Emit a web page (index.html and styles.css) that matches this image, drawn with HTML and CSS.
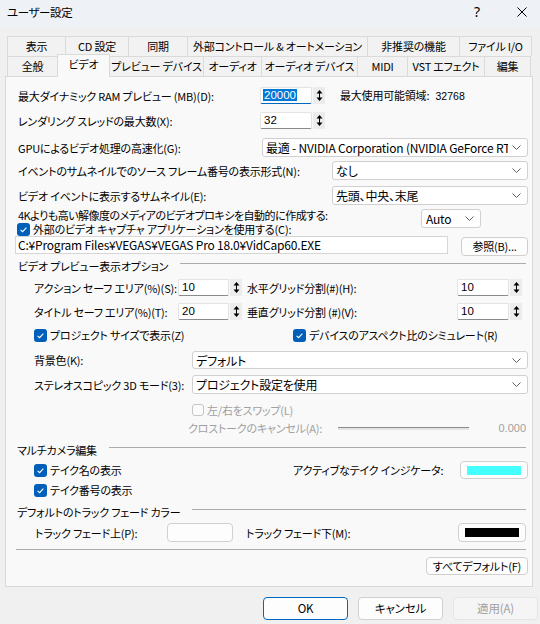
FILE: index.html
```
<!DOCTYPE html>
<html lang="ja">
<head>
<meta charset="utf-8">
<link rel="stylesheet" href="styles.css">
</head>
<body>
<div class="window">
  <div class="titlebar">
    <span class="title">ユーザー設定</span>
    <span class="help">?</span>
    <span class="close"><svg width="10" height="10" viewBox="0 0 10 10"><path d="M0.5 0.5 L9.5 9.5 M9.5 0.5 L0.5 9.5" stroke="#000" stroke-width="1" fill="none"/></svg></span>
  </div>

  <div class="tabs">
    <div class="tabrow">
      <div class="tab" style="width:58px">表示</div>
      <div class="tab" style="width:63px">CD 設定</div>
      <div class="tab" style="width:59px">同期</div>
      <div class="tab" style="width:180px">外部コントロール &amp; オートメーション</div>
      <div class="tab" style="width:92px">非推奨の機能</div>
      <div class="tab last" style="width:73px">ファイル I/O</div>
    </div>
    <div class="tabrow">
      <div class="tab" style="width:50px">全般</div>
      <div class="tab active" style="width:53px">ビデオ</div>
      <div class="tab" style="width:94px">プレビュー デバイス</div>
      <div class="tab" style="width:58px">オーディオ</div>
      <div class="tab" style="width:96px">オーディオ デバイス</div>
      <div class="tab" style="width:50px">MIDI</div>
      <div class="tab" style="width:77px">VST エフェクト</div>
      <div class="tab last" style="width:47px">編集</div>
    </div>
  </div>

  <div class="panel">
    <div class="row h19">
      <span class="lbl ind1" style="width:242px">最大ダイナミック RAM プレビュー (MB)(D):</span>
      <span class="num focus"><span class="hl">20000</span></span>
      <span class="spin"><svg width="7" height="13" viewBox="0 0 7 13"><path d="M3.5 1 L6.5 4.5 H0.5 Z M3.5 12 L6.5 8.5 H0.5 Z" fill="#000"/><path d="M3.5 4 V9" stroke="#000" stroke-width="1"/></svg></span>
      <span class="maxlbl">最大使用可能領域: <span class="mono">32768</span></span>
    </div>
    <div class="row h19 mt6">
      <span class="lbl ind1" style="width:242px">レンダリング スレッドの最大数(X):</span>
      <span class="num">32</span>
      <span class="spin"><svg width="7" height="13" viewBox="0 0 7 13"><path d="M3.5 1 L6.5 4.5 H0.5 Z M3.5 12 L6.5 8.5 H0.5 Z" fill="#000"/><path d="M3.5 4 V9" stroke="#000" stroke-width="1"/></svg></span>
    </div>
    <div class="row h19 mt8">
      <span class="lbl ind1" style="width:244px">GPUによるビデオ処理の高速化(G):</span>
      <span class="dd grow"><span class="v">最適 - NVIDIA Corporation (NVIDIA GeForce RTX 3070)</span><svg width="9" height="5" viewBox="0 0 9 5"><path d="M0.5 0.5 L4.5 4.5 L8.5 0.5" stroke="#5f5f5f" fill="none"/></svg></span>
    </div>
    <div class="row h19 mt4">
      <span class="lbl ind1" style="width:314px">イベントのサムネイルでのソース フレーム番号の表示形式(N):</span>
      <span class="dd grow"><span class="v">なし</span><svg width="9" height="5" viewBox="0 0 9 5"><path d="M0.5 0.5 L4.5 4.5 L8.5 0.5" stroke="#5f5f5f" fill="none"/></svg></span>
    </div>
    <div class="row h19 mt6">
      <span class="lbl ind1" style="width:314px">ビデオ イベントに表示するサムネイル(E):</span>
      <span class="dd grow"><span class="v">先頭、中央、末尾</span><svg width="9" height="5" viewBox="0 0 9 5"><path d="M0.5 0.5 L4.5 4.5 L8.5 0.5" stroke="#5f5f5f" fill="none"/></svg></span>
    </div>
    <div class="row h19 mt4 top">
      <span class="lbl ind1 tight" style="width:403px">4Kよりも高い解像度のメディアのビデオプロキシを自動的に作成する:</span>
      <span class="dd auto"><span class="v">Auto</span><svg width="9" height="5" viewBox="0 0 9 5"><path d="M0.5 0.5 L4.5 4.5 L8.5 0.5" stroke="#5f5f5f" fill="none"/></svg></span>
    </div>
    <div class="row h14 mtn6">
      <span class="cb ml1"><svg width="13" height="13" viewBox="0 0 13 13"><rect width="13" height="13" rx="3" fill="#005fb8"/><path d="M3.6 6.8 L5.6 8.7 L9.4 4.6" stroke="#fff" stroke-width="1.1" fill="none"/></svg></span>
      <span class="lbl cbt">外部のビデオ キャプチャ アプリケーションを使用する(C):</span>
    </div>
    <div class="row h19 top">
      <span class="path">C:¥Program Files¥VEGAS¥VEGAS Pro 18.0¥VidCap60.EXE</span>
      <span class="btn browse">参照(B)...</span>
    </div>

    <div class="row h14 mt4">
      <span class="lbl ind1">ビデオ プレビュー表示オプション</span>
      <span class="gline"></span>
    </div>
    <div class="row h17 mt6">
      <span class="lbl ind2" style="width:144px">アクション セーフ エリア(%)(S):</span>
      <span class="num nw">10</span>
      <span class="spin"><svg width="7" height="13" viewBox="0 0 7 13"><path d="M3.5 1 L6.5 4.5 H0.5 Z M3.5 12 L6.5 8.5 H0.5 Z" fill="#000"/><path d="M3.5 4 V9" stroke="#000" stroke-width="1"/></svg></span>
      <span class="lbl gridl" style="width:210px">水平グリッド分割(#)(H):</span>
      <span class="num">10</span>
      <span class="spin"><svg width="7" height="13" viewBox="0 0 7 13"><path d="M3.5 1 L6.5 4.5 H0.5 Z M3.5 12 L6.5 8.5 H0.5 Z" fill="#000"/><path d="M3.5 4 V9" stroke="#000" stroke-width="1"/></svg></span>
    </div>
    <div class="row h17 mt7">
      <span class="lbl ind2" style="width:144px">タイトル セーフ エリア(%)(T):</span>
      <span class="num nw">20</span>
      <span class="spin"><svg width="7" height="13" viewBox="0 0 7 13"><path d="M3.5 1 L6.5 4.5 H0.5 Z M3.5 12 L6.5 8.5 H0.5 Z" fill="#000"/><path d="M3.5 4 V9" stroke="#000" stroke-width="1"/></svg></span>
      <span class="lbl gridl" style="width:210px">垂直グリッド分割 (#)(V):</span>
      <span class="num">10</span>
      <span class="spin"><svg width="7" height="13" viewBox="0 0 7 13"><path d="M3.5 1 L6.5 4.5 H0.5 Z M3.5 12 L6.5 8.5 H0.5 Z" fill="#000"/><path d="M3.5 4 V9" stroke="#000" stroke-width="1"/></svg></span>
    </div>
    <div class="row h14 mt8">
      <span class="cell ind2">
        <span class="cb"><svg width="13" height="13" viewBox="0 0 13 13"><rect width="13" height="13" rx="3" fill="#005fb8"/><path d="M3.6 6.8 L5.6 8.7 L9.4 4.6" stroke="#fff" stroke-width="1.1" fill="none"/></svg></span>
        <span class="lbl cbt">プロジェクト サイズで表示(Z)</span>
      </span>
      <span class="cb"><svg width="13" height="13" viewBox="0 0 13 13"><rect width="13" height="13" rx="3" fill="#005fb8"/><path d="M3.6 6.8 L5.6 8.7 L9.4 4.6" stroke="#fff" stroke-width="1.1" fill="none"/></svg></span>
      <span class="lbl cbt">デバイスのアスペクト比のシミュレート(R)</span>
    </div>
    <div class="row h18 mt9">
      <span class="lbl ind2" style="width:158px">背景色(K):</span>
      <span class="dd grow h18d"><span class="v">デフォルト</span><svg width="9" height="5" viewBox="0 0 9 5"><path d="M0.5 0.5 L4.5 4.5 L8.5 0.5" stroke="#5f5f5f" fill="none"/></svg></span>
    </div>
    <div class="row h19 mt6">
      <span class="lbl ind2" style="width:158px">ステレオスコピック 3D モード(3):</span>
      <span class="dd grow"><span class="v">プロジェクト設定を使用</span><svg width="9" height="5" viewBox="0 0 9 5"><path d="M0.5 0.5 L4.5 4.5 L8.5 0.5" stroke="#5f5f5f" fill="none"/></svg></span>
    </div>
    <div class="row h14 mt9">
      <span class="cb off swap"></span>
      <span class="lbl dis swapt">左/右をスワップ(L)</span>
    </div>
    <div class="row h14 mt4">
      <span class="lbl dis xt" style="width:150px">クロストークのキャンセル(A):</span>
      <span class="track"></span>
      <span class="lbl dis val">0.000</span>
    </div>

    <div class="row h14 mt8">
      <span class="lbl ind0">マルチカメラ編集</span>
      <span class="gline"></span>
    </div>
    <div class="row h18 mt4">
      <span class="cell ind2">
        <span class="cb"><svg width="13" height="13" viewBox="0 0 13 13"><rect width="13" height="13" rx="3" fill="#005fb8"/><path d="M3.6 6.8 L5.6 8.7 L9.4 4.6" stroke="#fff" stroke-width="1.1" fill="none"/></svg></span>
        <span class="lbl cbt">テイク名の表示</span>
      </span>
      <span class="lbl" style="width:167px">アクティブなテイク インジケータ:</span>
      <span class="swatchbtn w68"><span class="sw cyan"></span></span>
    </div>
    <div class="row h14 mt4">
      <span class="cell ind2">
        <span class="cb"><svg width="13" height="13" viewBox="0 0 13 13"><rect width="13" height="13" rx="3" fill="#005fb8"/><path d="M3.6 6.8 L5.6 8.7 L9.4 4.6" stroke="#fff" stroke-width="1.1" fill="none"/></svg></span>
        <span class="lbl cbt">テイク番号の表示</span>
      </span>
    </div>

    <div class="row h14 mt8">
      <span class="lbl ind0">デフォルトのトラック フェード カラー</span>
      <span class="gline"></span>
    </div>
    <div class="row h19 mt4">
      <span class="lbl fadel" style="width:132px">トラック フェード上(P):</span>
      <span class="swatchbtn w66"><span class="sw white"></span></span>
      <span class="lbl fader" style="width:212px">トラック フェード下(M):</span>
      <span class="swatchbtn w68"><span class="sw black"></span></span>
    </div>
    <div class="hr"></div>
    <div class="row h18 mt7">
      <span class="btn alldef">すべてデフォルト(F)</span>
    </div>
  </div>

  <div class="footer">
    <span class="fbtn ok">OK</span>
    <span class="fbtn">キャンセル</span>
    <span class="fbtn disabled">適用(A)</span>
  </div>
</div>
</body>
</html>
```

FILE: styles.css
```
html, body {
  margin: 0;
  padding: 0;
}
body {
  background: #f0f0f0;
  font-family: "Noto Sans CJK JP", "Noto Sans", sans-serif;
  font-size: 11px;
  letter-spacing: -0.2px;
  color: #000;
  font-feature-settings: "palt";
}
.window {
  width: 540px;
  height: 624px;
  overflow: hidden;
}
.titlebar {
  height: 27px;
  background: #eef2f7;
  display: flex;
  align-items: flex-start;
  line-height: 24px;
}
.title {
  margin-left: 7px;
  flex: 1;
  font-size: 11.5px;
  letter-spacing: -0.4px;
}
.help {
  width: 14px;
  text-align: center;
  font-size: 14px;
  margin-right: 33px;
  font-family: "Noto Sans", sans-serif;
}
.close {
  width: 10px;
  height: 10px;
  margin-top: 7px;
  margin-right: 13px;
  display: flex;
}

.tabs {
  margin-top: 9px;
  padding-left: 7px;
}
.tabrow {
  display: flex;
  height: 20px;
}
.tab {
  box-sizing: border-box;
  height: 20px;
  border-top: 1px solid #dadada;
  border-left: 1px solid #dadada;
  background: #f2f2f2;
  text-align: center;
  line-height: 19px;
  white-space: nowrap;
  font-size: 11px;
}
.tab.last {
  border-right: 1px solid #dadada;
}
.tab.active {
  position: relative;
  z-index: 1;
  height: 23px;
  margin-top: -2px;
  line-height: 18px;
  background: #f9f9f9;
  border-right: 1px solid #dadada;
  margin-right: -1px;
}

.panel {
  box-sizing: border-box;
  margin-left: 5px;
  width: 528px;
  height: 511px;
  border: 1px solid #d9d9d9;
  background: #f9f9f9;
  padding: 9px 4px 0 10px;
}
.row {
  display: flex;
  align-items: center;
  white-space: nowrap;
}
.row.top {
  align-items: flex-start;
}
.h14 { height: 14px; }
.h17 { height: 17px; }
.h18 { height: 18px; }
.h19 { height: 19px; }
.mt4 { margin-top: 4px; }
.mt6 { margin-top: 6px; }
.mt7 { margin-top: 7px; }
.mt8 { margin-top: 8px; }
.mt9 { margin-top: 9px; }
.mtn6 { margin-top: -6px; }

.lbl {
  display: inline-block;
  flex: none;
  line-height: 14px;
}
.lbl.tight {
  line-height: 13px;
  letter-spacing: -0.5px;
}
.ind0 { margin-left: 1px; }
.ind1 { margin-left: 2px; }
.ind2 { margin-left: 18px; }
.ml1 { margin-left: 1px; }

.num {
  box-sizing: border-box;
  flex: none;
  width: 52px;
  height: 17px;
  background: #fff;
  border: 1px solid #e3e3e3;
  border-bottom-color: #8a8a8a;
  border-radius: 2px;
  font-family: "Liberation Sans", sans-serif;
  font-size: 11.5px;
  letter-spacing: 0;
  line-height: 15px;
  padding-left: 3px;
}
.num.nw {
  width: 51px;
}
.num.focus {
  border-bottom: 1px solid #0067c0;
  padding-left: 2px;
}
.hl {
  background: #0078d7;
  color: #fff;
  padding: 0 1px;
}
.spin {
  flex: none;
  width: 12px;
  height: 17px;
  margin-left: 1px;
  background: #ececec;
  display: flex;
  align-items: center;
  justify-content: center;
}
.maxlbl {
  margin-left: 15px;
  line-height: 14px;
}
.mono {
  font-family: "Liberation Sans", sans-serif;
  font-size: 10.5px;
  letter-spacing: 0;
  margin-left: 4px;
}

.dd {
  box-sizing: border-box;
  height: 19px;
  background: #fff;
  border: 1px solid #d0d0d0;
  border-radius: 3px;
  display: flex;
  align-items: center;
  padding: 0 6px 0 3px;
  font-size: 12px;
}
.dd.grow {
  flex: 1;
  min-width: 0;
}
.dd.h18d {
  height: 18px;
}
.dd.auto {
  width: 60px;
  flex: none;
  padding-left: 4px;
}
.dd .v {
  flex: 1;
  overflow: hidden;
  line-height: 17px;
}
.dd svg {
  flex: none;
  margin-left: 4px;
}

.cb {
  width: 13px;
  height: 13px;
  flex: none;
  display: flex;
}
.cb.off {
  box-sizing: border-box;
  width: 12px;
  height: 12px;
  border: 1px solid #c6c6c6;
  border-radius: 3px;
  background: #fbfbfb;
}
.cbt {
  margin-left: 3px;
}
.cell {
  display: flex;
  align-items: center;
  width: 259px;
  flex: none;
}
.swap {
  margin-left: 176px;
}
.swapt {
  margin-left: 3px;
}
.dis {
  color: #a0a0a0;
}
.xt {
  margin-left: 172px;
}
.track {
  box-sizing: border-box;
  width: 131px;
  height: 3px;
  border-top: 1px solid #8a8a8a;
  background: #e4e4e4;
  flex: none;
}
.val {
  flex: 1;
  text-align: right;
  margin-right: 2px;
  font-family: "Liberation Sans", sans-serif;
  font-size: 11px;
  letter-spacing: 0;
}

.path {
  box-sizing: border-box;
  margin-left: -1px;
  width: 433px;
  height: 18px;
  background: #fff;
  border: 1px solid #d6d6d6;
  line-height: 16px;
  padding-left: 2px;
  font-size: 12px;
}
.btn {
  box-sizing: border-box;
  height: 19px;
  border: 1px solid #cfcfcf;
  border-radius: 4px;
  background: #fdfdfd;
  text-align: center;
  line-height: 17px;
}
.browse {
  margin-left: 13px;
  width: 67px;
  margin-top: 1px;
}
.alldef {
  margin-left: auto;
  width: 102px;
  height: 18px;
  line-height: 16px;
}

.gline {
  flex: 1;
  height: 0;
  border-top: 1px solid #acacac;
  margin: 0 2px 6px 12px;
}
.gridl {
  margin-left: 5px;
}
.fadel {
  margin-left: 19px;
}
.fader {
  margin-left: 13px;
}

.swatchbtn {
  box-sizing: border-box;
  flex: none;
  height: 19px;
  border: 1px solid #d0d0d0;
  border-radius: 4px;
  background: #fdfdfd;
  display: flex;
  align-items: center;
  justify-content: center;
}
.row.h18 .swatchbtn {
  height: 18px;
}
.w66 { width: 66px; }
.w68 { width: 68px; }
.sw {
  width: 54px;
  height: 9px;
}
.sw.cyan { background: #44ffff; }
.sw.white { background: #fdfdfd; }
.sw.black { background: #000; }

.hr {
  margin-top: 7px;
  margin-right: 2px;
  height: 0;
  border-top: 1px solid #acacac;
}

.footer {
  display: flex;
  justify-content: flex-end;
  gap: 10px;
  margin-top: 10px;
  padding-right: 2px;
}
.fbtn {
  box-sizing: border-box;
  width: 85px;
  height: 23px;
  border: 1px solid #d0d0d0;
  border-radius: 4px;
  background: #fdfdfd;
  text-align: center;
  line-height: 21px;
  font-size: 11.5px;
}
.fbtn.ok {
  border-color: #0067c0;
}
.fbtn.disabled {
  background: #f5f5f5;
  border-color: #e5e5e5;
  color: #a0a0a0;
}
```
